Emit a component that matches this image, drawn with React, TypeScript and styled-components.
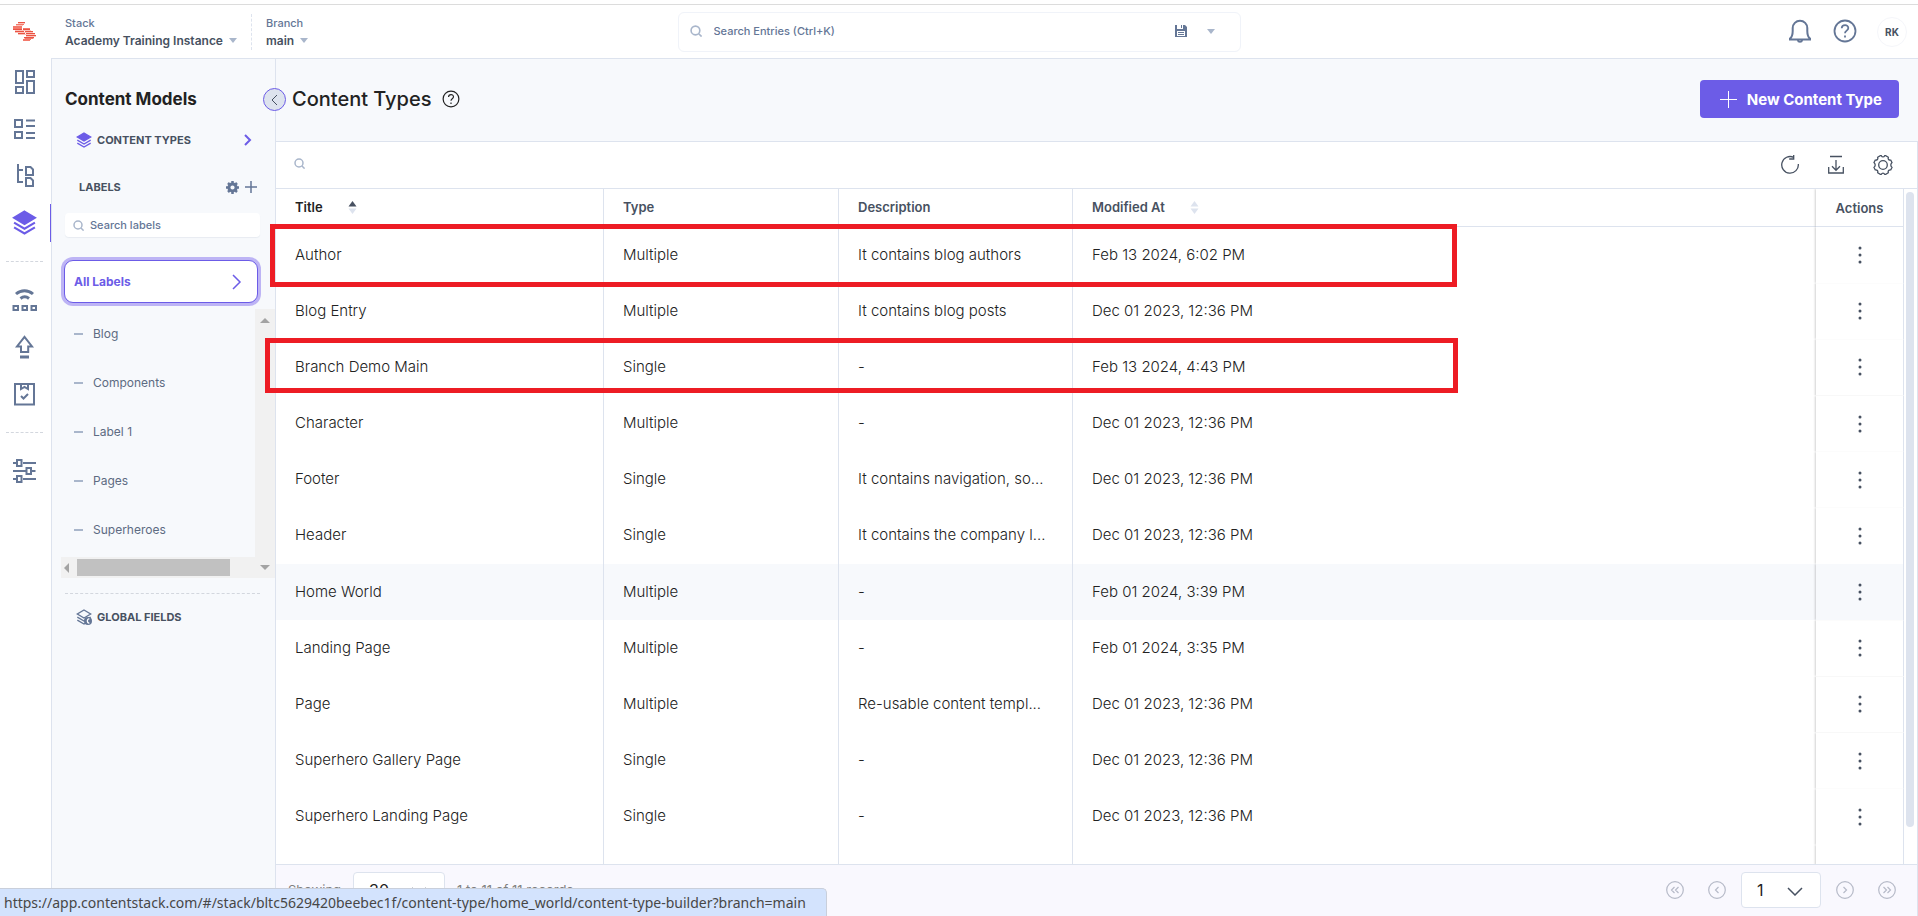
import React from "react";
import styled, { createGlobalStyle, css } from "styled-components";

const c = {
  line: "#dde3ee",
  panel: "#f7f9fc",
  slate: "#647696",
  text: "#475161",
  ink: "#222222",
  purple: "#6c5ce7",
  pale: "#a9b6cb",
  red: "#ed1c24",
};

const GlobalStyle = createGlobalStyle`
  *, *::before, *::after { box-sizing: border-box; }
  body { margin: 0; background: #fff; color: ${c.ink}; font-family: Inter, "Liberation Sans", sans-serif; font-size: 14px; }
  button, input, select { font: inherit; color: inherit; margin: 0; }
  button { border: 0; padding: 0; background: none; cursor: pointer; }
  a { color: inherit; text-decoration: none; }
  h1, h2, h3, ul { margin: 0; padding: 0; list-style: none; }
  svg { display: block; flex: none; }
`;

const Shell = styled.div`
  position: relative;
  display: flex;
  flex-direction: column;
  height: 100vh;
  min-height: 640px;
  overflow: hidden;
  padding-top: 4px;
`;

const TopBar = styled.header`
  display: grid;
  grid-template-columns: 1fr 563px 1fr;
  flex: none;
  height: 54px;
  border-top: 1px solid #dcdcdc;
`;

const TopLeft = styled.div`
  display: flex;
  align-items: center;
`;

const LogoLink = styled.a`
  display: flex;
  width: 51px;
  padding-left: 13px;
`;

const Picker = styled.div`
  display: flex;
  flex-direction: column;
  align-items: flex-start;
  padding: 0 14px;
  height: 36px;

  & + & { border-left: 1px dashed ${c.line}; }
`;

const PickerLabel = styled.span`
  font-size: 11px;
  line-height: 18px;
  font-weight: 500;
  color: ${c.slate};
`;

const PickerButton = styled.button`
  display: flex;
  align-items: center;
  gap: 6px;
  font-size: 12px;
  line-height: 18px;
  font-weight: 600;
  color: ${c.text};
  white-space: nowrap;
`;

const Caret = styled.span`
  border: 4px solid transparent;
  border-top: 5px solid ${c.pale};
  border-bottom: 0;
`;

const SearchBar = styled.div`
  display: flex;
  align-items: center;
  align-self: center;
  height: 40px;
  padding: 0 25px 1px 11px;
  gap: 12px;
  border: 1px solid #f0f3f9;
  border-radius: 6px;
`;

const BareInput = styled.input`
  flex: 1;
  min-width: 0;
  border: 0;
  padding: 0;
  outline: 0;
  background: transparent;
  font-size: 11px;
  font-weight: 500;

  &::placeholder { color: ${c.slate}; opacity: 1; }
`;

const TopRight = styled.div`
  display: flex;
  align-items: center;
  justify-content: flex-end;
  gap: 19px;
  padding-right: 11px;
`;

const IconButton = styled.button`
  display: grid;
  place-items: center;
`;

const TopIconButton = styled(IconButton)`
  width: 26px;
  padding-bottom: 2px;
  color: ${c.slate};
`;

const SearchOption = styled(IconButton)`
  padding-left: 8px;
  color: ${c.slate};

  & + & { padding-left: 8px; }
`;

const Avatar = styled.button`
  width: 30px;
  height: 30px;
  border: 1px solid #f5f6fa;
  border-radius: 50%;
  font-size: 10px;
  font-weight: 700;
  color: ${c.text};
`;

const Body = styled.div`
  display: flex;
  flex: 1;
  min-height: 0;
`;

const Rail = styled.nav`
  display: flex;
  flex-direction: column;
  flex: none;
  width: 51px;
`;

const RailLink = styled.a<{ $active?: boolean }>`
  display: flex;
  align-items: center;
  height: 47px;
  padding-left: 12px;
  color: ${(p) => (p.$active ? c.purple : c.slate)};
  ${(p) => p.$active && css`background: linear-gradient(${c.purple}, ${c.purple}) right center / 1px 38px no-repeat;`}
`;

const RailRule = styled.hr`
  width: 37px;
  margin: 15px 0 14px 6px;
  border: 0;
  border-top: 1px dashed #d3d7de;
`;

const Sidebar = styled.aside`
  display: flex;
  flex-direction: column;
  flex: none;
  width: 225px;
  padding: 28px 0 0 13px;
  background: ${c.panel};
  border: 1px solid ${c.line};
  border-bottom: 0;
`;

const SideTitle = styled.h2`
  margin-bottom: 17px;
  font-size: 17px;
  line-height: 24px;
  font-weight: 700;
`;

const SideLink = styled.a`
  display: flex;
  align-items: center;
  gap: 5px;
  height: 24px;
  margin-right: 20px;
  padding-left: 11px;
  font-size: 11px;
  font-weight: 700;
  color: ${c.text};

  svg:last-of-type:not(:first-child) { margin-left: auto; }
`;

const LabelsHead = styled.div`
  display: flex;
  align-items: center;
  gap: 6px;
  height: 24px;
  margin: 23px 18px 0 14px;
  color: ${c.slate};
`;

const LabelsTitle = styled.h3`
  flex: 1;
  font-size: 11px;
  font-weight: 700;
  color: ${c.text};
`;

const LabelSearch = styled.label`
  display: flex;
  align-items: center;
  gap: 6px;
  height: 24px;
  margin: 14px 15px 0 0;
  padding-left: 8px;
  background: #fff;
  border-radius: 4px;
  box-shadow: 0 1px 1px rgba(100, 118, 150, 0.1);
`;

const AllLabels = styled.button`
  display: flex;
  align-items: center;
  justify-content: space-between;
  flex: none;
  height: 43px;
  margin: 23px 17px 6px -1px;
  padding: 0 15px 0 9px;
  background: #fff;
  border: 1px solid ${c.purple};
  border-radius: 9px;
  box-shadow: 0 0 0 3px #bdb4f5;
  font-size: 12px;
  font-weight: 700;
  color: ${c.purple};
`;

const LabelArea = styled.div`
  display: grid;
  grid-template-columns: 1fr 20px;
  margin-left: -4px;
`;

const LabelList = styled.ul`
  padding-bottom: 3px;
`;

const LabelItem = styled.a`
  display: flex;
  align-items: center;
  gap: 10px;
  height: 49px;
  padding-left: 13px;
  font-size: 12px;
  color: #5d6b82;

  &::before { content: ""; width: 9px; height: 2px; background: ${c.pale}; }
`;

const Track = styled.div<{ $horizontal?: boolean }>`
  display: flex;
  flex-direction: ${(p) => (p.$horizontal ? "row" : "column")};
  align-items: center;
  background: #f1f1f1;
  ${(p) => p.$horizontal ? css`height: 21px; padding-left: 3px; gap: 8px;` : css`padding-top: 9px;`}
`;

const Corner = styled.div`
  display: grid;
  place-items: center;
  background: #f1f1f1;
`;

const HThumb = styled.div`
  width: 153px;
  height: 17px;
  background: #c1c1c1;
`;

const SideRule = styled.hr`
  width: 195px;
  margin: 15px 0 11px;
  border: 0;
  border-top: 1px dashed #d3d7de;
`;

const Main = styled.main`
  position: relative;
  display: flex;
  flex-direction: column;
  flex: 1;
  min-width: 0;
`;

const Collapse = styled.button`
  position: absolute;
  left: -13px;
  top: 30px;
  display: grid;
  place-items: center;
  width: 23px;
  height: 23px;
  border: 1px solid ${c.purple};
  border-radius: 50%;
  background: ${c.line};
  color: ${c.text};
`;

const PageHead = styled.div`
  display: flex;
  align-items: center;
  gap: 10px;
  flex: none;
  height: 84px;
  padding: 0 19px 2px 16px;
  background: ${c.panel};
  border: solid ${c.line};
  border-width: 1px 0;
`;

const PageTitle = styled.h1`
  font-size: 20px;
  line-height: 28px;
  font-weight: 500;
`;

const Primary = styled.button`
  display: flex;
  align-items: center;
  gap: 10px;
  height: 38px;
  margin-left: auto;
  padding: 0 17px 0 20px;
  border-radius: 4px;
  background: ${c.purple};
  color: #fff;
  font-size: 15px;
  font-weight: 700;
`;

const Toolbar = styled.div`
  display: flex;
  align-items: center;
  gap: 26px;
  flex: none;
  height: 47px;
  padding: 0 23px 0 18px;
  border-bottom: 1px solid ${c.line};
  border-right: 1px solid ${c.line};
  color: ${c.text};
`;

const TableSearch = styled.label`
  display: flex;
  flex: 1;
  align-items: center;
  padding-bottom: 3px;
  gap: 8px;
`;

const TableArea = styled.div`
  display: flex;
  flex: 1;
  min-height: 0;
  overflow: hidden;
  border-right: 1px solid ${c.line};
`;

const Table = styled.table`
  flex: 1;
  table-layout: fixed;
  width: 100%;
  height: 676px;
  border-collapse: separate;
  border-spacing: 0;
`;

const Th = styled.th<{ $w?: number; $sorted?: boolean }>`
  width: ${(p) => (p.$w ? p.$w + "px" : "auto")};
  height: 38px;
  padding: 0 0 1px 19px;
  border: solid ${c.line};
  border-width: 0 1px 1px 0;
  font-size: 13px;
  font-weight: 600;
  text-align: left;
  color: ${(p) => (p.$sorted ? c.ink : c.text)};
`;

const ThInner = styled.span`
  display: flex;
  align-items: center;
  gap: 25px;
`;

const Td = styled.td`
  padding: 0 15px 2px 19px;
  border-right: 1px solid ${c.line};
  font-size: 15px;
  font-weight: 300;
  white-space: nowrap;
  overflow: hidden;
  text-overflow: ellipsis;
`;

const Tr = styled.tr<{ $hover?: boolean }>`
  background: ${(p) => (p.$hover ? c.panel : "#fff")};

  & > :nth-child(4) { border-right: 0; }
  & > :nth-child(5) { padding: 0; text-align: center; box-shadow: -1px 0 2px rgba(0, 0, 0, 0.18); clip-path: inset(0 0 0 -4px); }
`;

const SpacerCell = styled(Td)`
  height: 20px;
  padding: 0;
`;

const RowMenu = styled.button`
  display: inline-grid;
  place-items: center;
  width: 24px;
  height: 24px;
  vertical-align: middle;
`;

const VThumb = styled.div`
  flex: none;
  width: 8px;
  height: 635px;
  margin: 3px 3px 0 2px;
  border-radius: 4px;
  background: ${c.line};
`;

const Footer = styled.footer`
  display: flex;
  align-items: center;
  flex: none;
  height: 52px;
  padding: 0 21px 1px 12px;
  gap: 12px;
  background: #f9f8fe;
  border: solid ${c.line};
  border-width: 1px 1px 0 0;
  font-size: 13px;
  color: #808080;
`;

const Pager = styled.div`
  display: flex;
  align-items: center;
  gap: 15px;
  margin-left: auto;
  color: #b6bac8;
`;

const PagerGroup = styled.div`
  display: flex;
  gap: 24px;
`;

const SelectBox = styled.label<{ $w: number }>`
  display: grid;
  align-items: center;
  width: ${(p) => p.$w}px;
  height: 36px;
  border: 1px solid ${c.line};
  border-radius: 4px;
  background: #fff;
  color: ${c.ink};

  & > * { grid-area: 1 / 1; }
  & > svg { justify-self: end; margin: 2px 17px 0 0; pointer-events: none; color: ${c.text}; }
`;

const Select = styled.select`
  appearance: none;
  width: 100%;
  height: 100%;
  padding: 0 15px;
  border: 0;
  background: transparent;
  font-size: 16px;
  font-weight: 400;
`;

const StatusBar = styled.div`
  position: absolute;
  left: 0;
  bottom: 0;
  height: 28px;
  padding: 0 20px 0 4px;
  border: solid #c9cfdb;
  border-width: 1px 1px 0 0;
  border-top-right-radius: 5px;
  background: #d3e3fd;
  color: #474747;
  font: 14px/28px "Noto Sans", "Open Sans", sans-serif;
`;

const Callout = styled.div<{ $top: number; $left: number; $right: number; $h: number }>`
  position: absolute;
  top: ${(p) => p.$top}px;
  left: ${(p) => p.$left}px;
  width: ${(p) => p.$right - p.$left}px;
  height: ${(p) => p.$h}px;
  border: 5px solid ${c.red};
  pointer-events: none;
`;

type IconProps = { w: number; h?: number; vw?: number; vh?: number; sw?: number; children: React.ReactNode; color?: string };
const Icon = ({ w, h = w, vw = w, vh = h, sw = 2, children, color }: IconProps) => (
  <svg width={w} height={h} viewBox={`0 0 ${vw} ${vh}`} fill="none" stroke="currentColor" strokeWidth={sw} color={color} aria-hidden="true">
    {children}
  </svg>
);

const Magnifier = ({ size = 11 }: { size?: number }) => (
  <Icon w={size} vw={11} vh={11} sw={1.5} color={c.pale}>
    <circle cx="5" cy="5" r="4" />
    <path d="M8 8l2.6 2.6" />
  </Icon>
);

const Chevron = ({ d, w, h, sw = 1.5, color }: { d: string; w: number; h: number; sw?: number; color?: string }) => (
  <Icon w={w} h={h} sw={sw} color={color}><path d={d} /></Icon>
);

const Logo = () => (
  <svg width="24" height="19" viewBox="0 0 24 19" aria-hidden="true">
    <path fill="#fbc3bb" d="M5 1h7v1H5zM3 3h7v1H3zM0 5h9v1H0zM2 8h16v1H2zM2 10h18v1H2zM5 12h17v1H5zM13 14h10v1H13zM11 16h10v1H11z" />
    <path fill="#f3796b" d="M3 2h8v1H3zM0 4h9v2H0zM0 6h9v1H0zM10 6h7v1h-7zM12 16h8v1h-8zM10 17h8v1h-8zM10 18h7v1h-7z" />
    <path fill="#ea5343" d="M5 0h7v1H5zM0 7h9v1H0zM10 7h7v1h-7zM2 9h9v1H2zM12 9h8v1h-8zM5 11h7v1H5zM13 11h9v1h-9zM13 13h10v1H13zM11 15h10v1H11z" />
  </svg>
);

const Layers = ({ size, filled = true }: { size: number; filled?: boolean }) => (
  <Icon w={size} vw={24} vh={24} sw={2} color={filled ? c.purple : c.slate}>
    <path d="M12 1.5L22 7.5L12 13.5L2 7.5Z" fill={filled ? "currentColor" : "none"} />
    <path d="M2 12.2L12 18L22 12.2M2 16.7L12 22.5L22 16.7" />
    {!filled && <><circle cx="18" cy="18" r="6" fill="currentColor" stroke="none" /><path d="M20 14.5c-4 1-4 6 0 7" stroke="#fff" /></>}
  </Icon>
);

const DashboardIcon = () => (
  <Icon w={24}><path d="M4 1h7v12H4zM4 17h7v6H4zM15 1h7v6h-7zM15 11h7v12h-7z" /></Icon>
);
const EntriesIcon = () => (
  <Icon w={24}><path d="M3 3h7v7H3zM3 15h7v6H3zM14 3.5h9M14 9h9M14 16h9M14 21h9" /></Icon>
);
const TreeIcon = () => (
  <Icon w={24}><path d="M6 0v18h5M6 6h5M14 3h4.500l2.500 2.500V11h-7zM14 14h4.500l2.500 2.500V22h-7z" /></Icon>
);
const BroadcastIcon = () => (
  <Icon w={25} h={24}><path d="M1.500 18h4.500v4H1.500zM10.500 18h4.500v4h-4.500zM19.500 18h4.500v4h-4.500z" /><path d="M4 6c5-4.500 12-4.500 17 0M8.500 10.500c2.500-2 6-2 8.500 0" strokeWidth="3" /></Icon>
);
const PublishIcon = () => (
  <Icon w={24}><path d="M12.500 1.800L20 11.500h-3.800V17H9v-5.500H5z" /><path d="M8 22h9" strokeWidth="3" /></Icon>
);
const TaskIcon = () => (
  <Icon w={24}><path d="M3 2h19v20.500H3z" /><path d="M9 2v5l3.500-2L16 7V2M9 14l2.500 2.500L16 12" /></Icon>
);
const SettingsIcon = () => (
  <Icon w={24}><path d="M1 4h4M11 4h13M1 12h13M20 12h3.500M1 20h4M11 20h13M5 1h4.500v6H5zM14.500 9H19v6h-4.500zM5 17h4.500v6H5z" /></Icon>
);
const BellIcon = () => (
  <Icon w={24}><path d="M2 19.500c2-1.500 2.700-3.500 2.700-7.500V9a7.300 7.300 0 0 1 14.600 0v3c0 4 .7 6 2.700 7.500v1H2z" /><path d="M9.800 21c.5 2.300 3.900 2.300 4.400 0" /></Icon>
);
const HelpIcon = ({ size, sw }: { size: number; sw: number }) => (
  <Icon w={size} vw={24} vh={24} sw={sw}><circle cx="12" cy="12" r="10.500" /><path d="M8.700 9.300c.2-4.200 6.600-4.200 6.600-.2 0 2.600-3.300 2.500-3.300 5.200M12 16.500v2" /></Icon>
);
const SaveIcon = () => (
  <Icon w={12} h={12}><path d="M0 0h2v4h6V0h2l2 2v10H0z" fill="currentColor" stroke="none" /><path d="M2 6h8v5H2z" fill="#fff" stroke="none" /><path d="M3 7.500h6M3 9.500h6M6.500 0v3" strokeWidth="1" /></Icon>
);
const GearIcon = () => (
  <Icon w={13} h={13} sw={2.500}><circle cx="6.500" cy="6.500" r="3.600" strokeWidth="3" /><path d="M6.500 0v2M6.500 11v2M0 6.500h2M11 6.500h2M2 2l1.400 1.400M9.600 9.600L11 11M11 2L9.600 3.400M3.400 9.600L2 11" /></Icon>
);
const RefreshIcon = () => (
  <Icon w={20} sw={1.300}><path d="M13.700 2.400A8.300 8.300 0 1 0 18.300 9M13.700 0v4h-4.500" /></Icon>
);
const DownloadIcon = () => (
  <Icon w={20} sw={1.300}><path d="M4 1.500h12M10 5v10M6 11.300l4 4 4-4M2.700 12v6h14.600v-6" /></Icon>
);
const CogIcon = () => (
  <Icon w={22} sw={1.300}><circle cx="11" cy="11" r="4.300" /><path d="M8.300 1.700h1c.8 1.600 2.600 1.600 3.400 0h1l2.600 1.500c-.6 2 .5 3.200 2.500 3l1.200 2.300c-1.600 1.500-1.600 3.500 0 5l-1.200 2.300c-2-.2-3.100 1-2.500 3l-2.600 1.500h-1c-.8-1.600-2.600-1.600-3.400 0h-1l-2.600-1.500c.6-2-.5-3.200-2.500-3L2 13.500c1.600-1.500 1.600-3.500 0-5l1.200-2.300c2 .2 3.100-1 2.500-3z" /></Icon>
);
const PlusIcon = ({ size, sw }: { size: number; sw: number }) => (
  <Icon w={size} sw={sw}><path d={`M${size / 2} 0v${size}M0 ${size / 2}h${size}`} /></Icon>
);
const SortIcon = ({ up }: { up?: boolean }) => (
  <Icon w={9} h={13}><path d="M4.500 0L8.500 5.500h-8z" fill={up ? c.text : c.line} stroke="none" /><path d="M4.500 13L8.500 7.500h-8z" fill={c.line} stroke="none" /></Icon>
);
const DotsIcon = () => (
  <Icon w={4} h={18}><g fill={c.text} stroke="none"><circle cx="2" cy="2" r="1.500" /><circle cx="2" cy="9" r="1.500" /><circle cx="2" cy="16" r="1.500" /></g></Icon>
);
const PageArrow = ({ d }: { d: string }) => (
  <Icon w={18} sw={1.200}><circle cx="9" cy="9" r="8.300" /><path d={d} /></Icon>
);

const rows = [
  ["Author", "Multiple", "It contains blog authors", "Feb 13 2024, 6:02 PM"],
  ["Blog Entry", "Multiple", "It contains blog posts", "Dec 01 2023, 12:36 PM"],
  ["Branch Demo Main", "Single", "-", "Feb 13 2024, 4:43 PM"],
  ["Character", "Multiple", "-", "Dec 01 2023, 12:36 PM"],
  ["Footer", "Single", "It contains navigation, so...", "Dec 01 2023, 12:36 PM"],
  ["Header", "Single", "It contains the company l...", "Dec 01 2023, 12:36 PM"],
  ["Home World", "Multiple", "-", "Feb 01 2024, 3:39 PM"],
  ["Landing Page", "Multiple", "-", "Feb 01 2024, 3:35 PM"],
  ["Page", "Multiple", "Re-usable content templ...", "Dec 01 2023, 12:36 PM"],
  ["Superhero Gallery Page", "Single", "-", "Dec 01 2023, 12:36 PM"],
  ["Superhero Landing Page", "Single", "-", "Dec 01 2023, 12:36 PM"],
];

const labels = ["Blog", "Components", "Label 1", "Pages", "Superheroes"];

export default function App() {
  return (
    <Shell>
      <GlobalStyle />
      <TopBar>
        <TopLeft>
          <LogoLink href="#" aria-label="Home"><Logo /></LogoLink>
          <Picker>
            <PickerLabel>Stack</PickerLabel>
            <PickerButton>Academy Training Instance <Caret /></PickerButton>
          </Picker>
          <Picker>
            <PickerLabel>Branch</PickerLabel>
            <PickerButton>main <Caret /></PickerButton>
          </Picker>
        </TopLeft>
        <SearchBar>
          <Magnifier size={12} />
          <BareInput aria-label="Search entries" placeholder="Search Entries (Ctrl+K)" />
          <SearchOption aria-label="Saved searches"><SaveIcon /></SearchOption>
          <SearchOption aria-label="Search options"><Caret /></SearchOption>
        </SearchBar>
        <TopRight>
          <TopIconButton aria-label="Notifications"><BellIcon /></TopIconButton>
          <TopIconButton aria-label="Help"><HelpIcon size={24} sw={1.8} /></TopIconButton>
          <Avatar>RK</Avatar>
        </TopRight>
      </TopBar>

      <Body>
        <Rail>
          <RailLink href="#" aria-label="Dashboard"><DashboardIcon /></RailLink>
          <RailLink href="#" aria-label="Entries"><EntriesIcon /></RailLink>
          <RailLink href="#" aria-label="Assets"><TreeIcon /></RailLink>
          <RailLink href="#" aria-label="Content models" $active><Layers size={25} /></RailLink>
          <RailRule />
          <RailLink href="#" aria-label="Releases"><BroadcastIcon /></RailLink>
          <RailLink href="#" aria-label="Publish queue"><PublishIcon /></RailLink>
          <RailLink href="#" aria-label="Tasks"><TaskIcon /></RailLink>
          <RailRule />
          <RailLink href="#" aria-label="Settings"><SettingsIcon /></RailLink>
        </Rail>

        <Sidebar>
          <SideTitle>Content Models</SideTitle>
          <SideLink href="#">
            <Layers size={16} />CONTENT TYPES
            <Chevron w={16} h={12} d="M6 1l5 5-5 5" sw={2} color={c.purple} />
          </SideLink>
          <LabelsHead>
            <LabelsTitle>LABELS</LabelsTitle>
            <IconButton aria-label="Manage labels"><GearIcon /></IconButton>
            <IconButton aria-label="Add label"><PlusIcon size={12} sw={1.5} /></IconButton>
          </LabelsHead>
          <LabelSearch>
            <Magnifier />
            <BareInput aria-label="Search labels" placeholder="Search labels" />
          </LabelSearch>
          <AllLabels>All Labels<Chevron w={10} h={16} d="M1 1l7 7-7 7" /></AllLabels>
          <LabelArea>
            <LabelList>
              {labels.map((l) => (
                <li key={l}><LabelItem href="#">{l}</LabelItem></li>
              ))}
            </LabelList>
            <Track>
              <Icon w={10} h={5}><path d="M5 0l5 5H0z" fill="#a3a3a3" stroke="none" /></Icon>
            </Track>
            <Track $horizontal>
              <Icon w={5} h={10}><path d="M0 5l5-5v10z" fill="#a3a3a3" stroke="none" /></Icon>
              <HThumb />
            </Track>
            <Corner><Icon w={10} h={5}><path d="M5 5l5-5H0z" fill="#a3a3a3" stroke="none" /></Icon></Corner>
          </LabelArea>
          <SideRule />
          <SideLink href="#"><Layers size={16} filled={false} />GLOBAL FIELDS</SideLink>
        </Sidebar>

        <Main>
          <PageHead>
            <PageTitle>Content Types</PageTitle>
            <IconButton aria-label="About content types"><HelpIcon size={18} sw={1.6} /></IconButton>
            <Primary><PlusIcon size={17} sw={1} />New Content Type</Primary>
          </PageHead>
          <Toolbar>
            <TableSearch><Magnifier /><BareInput aria-label="Search content types" /></TableSearch>
            <IconButton aria-label="Refresh"><RefreshIcon /></IconButton>
            <IconButton aria-label="Export"><DownloadIcon /></IconButton>
            <IconButton aria-label="Table settings"><CogIcon /></IconButton>
          </Toolbar>
          <TableArea>
            <Table>
              <thead>
                <Tr>
                  <Th $w={328} $sorted><ThInner>Title<SortIcon up /></ThInner></Th>
                  <Th $w={235}>Type</Th>
                  <Th $w={234}>Description</Th>
                  <Th><ThInner>Modified At<SortIcon /></ThInner></Th>
                  <Th $w={88}>Actions</Th>
                </Tr>
              </thead>
              <tbody>
                {rows.map((r) => (
                  <Tr key={r[0]} $hover={r[0] === "Home World"}>
                    {r.map((v, i) => <Td key={i}>{v}</Td>)}
                    <Td><RowMenu aria-label={`Actions for ${r[0]}`}><DotsIcon /></RowMenu></Td>
                  </Tr>
                ))}
              </tbody>
              <tfoot aria-hidden="true">
                <Tr><SpacerCell /><SpacerCell /><SpacerCell /><SpacerCell /><SpacerCell /></Tr>
              </tfoot>
            </Table>
            <VThumb />
          </TableArea>
          <Footer>
            <span>Showing</span>
            <SelectBox $w={92}>
              <Select aria-label="Rows per page" defaultValue="30"><option>30</option></Select>
              <Chevron w={16} h={9} d="M1 1l7 7 7-7" />
            </SelectBox>
            <span>1 to 11 of 11 records</span>
            <Pager>
              <PagerGroup>
                <IconButton aria-label="First page"><PageArrow d="M8.500 6l-3 3 3 3M12.500 6l-3 3 3 3" /></IconButton>
                <IconButton aria-label="Previous page"><PageArrow d="M10.500 6l-3 3 3 3" /></IconButton>
              </PagerGroup>
              <SelectBox $w={80}>
                <Select aria-label="Page" defaultValue="1"><option>1</option></Select>
                <Chevron w={16} h={9} d="M1 1l7 7 7-7" />
              </SelectBox>
              <PagerGroup>
                <IconButton aria-label="Next page"><PageArrow d="M7.500 6l3 3-3 3" /></IconButton>
                <IconButton aria-label="Last page"><PageArrow d="M5.500 6l3 3-3 3M9.500 6l3 3-3 3" /></IconButton>
              </PagerGroup>
            </Pager>
          </Footer>
          <Collapse aria-label="Collapse sidebar"><Chevron w={7} h={12} d="M6 1L1 6l5 5" sw={1} /></Collapse>
        </Main>
      </Body>

      <Callout $top={224} $left={270} $right={1457} $h={63} />
      <Callout $top={338} $left={265} $right={1458} $h={55} />
      <StatusBar>https://app.contentstack.com/#/stack/bltc5629420beebec1f/content-type/home_world/content-type-builder?branch=main</StatusBar>
    </Shell>
  );
}
